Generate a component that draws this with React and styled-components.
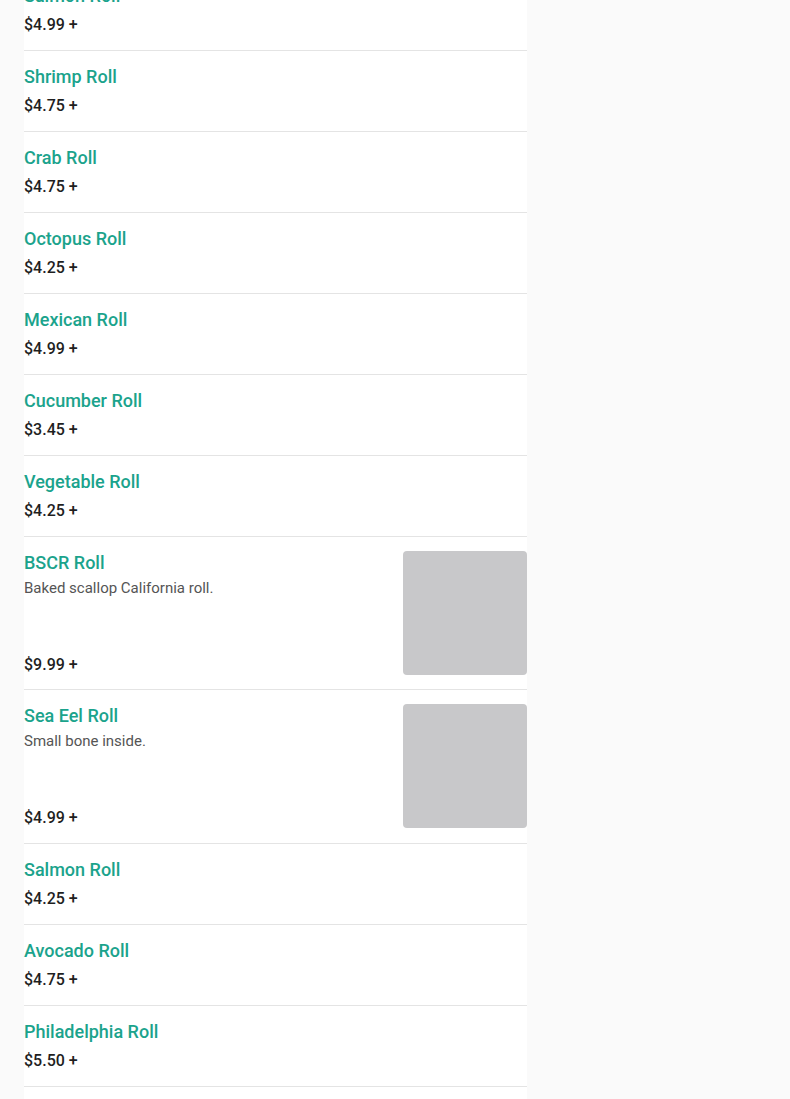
import React from "react";
import styled, { createGlobalStyle } from "styled-components";

const Global = createGlobalStyle`
  html, body { margin: 0; padding: 0; background: #fafafa; }
  body { font-family: Roboto, "Noto Sans", Arial, sans-serif; }
`;

const Page = styled.div`
  display: flex;
  padding-left: 24px;
  height: 1099px;
  overflow: hidden;
`;

const Panel = styled.div`
  width: 503px;
  background: #ffffff;
  display: flex;
  flex-direction: column;
  margin-top: -30px;
`;

const Row = styled.div`
  display: flex;
  gap: 16px;
  padding: ${(p) => (p.$image ? "14px 0 14px" : "14px 0 13px")};
  border-bottom: 1px solid #e4e4e4;
  &:nth-child(9) { padding-bottom: 15px; }
`;

const Info = styled.div`
  flex: 1;
  display: flex;
  flex-direction: column;
  justify-content: ${(p) => (p.$image ? "space-between" : "flex-start")};
`;

const Name = styled.div`
  font-size: 18px;
  line-height: 24px;
  font-weight: 500;
  color: #1ba38c;
  margin-bottom: ${(p) => (p.$image ? "0" : "5px")};
`;

const Desc = styled.div`
  font-size: 15px;
  line-height: 20px;
  color: #555555;
  margin-top: 3px;
`;

const Price = styled.div`
  font-size: 16px;
  line-height: 24px;
  font-weight: 500;
  color: #1f1f1f;
  margin-bottom: ${(p) => (p.$image ? "-2px" : "0")};
`;

const Thumb = styled.div`
  width: 124px;
  height: 124px;
  flex: none;
  border-radius: 4px;
  background: #c8c8ca;
`;

const items = [
  { name: "Salmon Roll", price: "$4.99 +" },
  { name: "Shrimp Roll", price: "$4.75 +" },
  { name: "Crab Roll", price: "$4.75 +" },
  { name: "Octopus Roll", price: "$4.25 +" },
  { name: "Mexican Roll", price: "$4.99 +" },
  { name: "Cucumber Roll", price: "$3.45 +" },
  { name: "Vegetable Roll", price: "$4.25 +" },
  { name: "BSCR Roll", price: "$9.99 +", desc: "Baked scallop California roll.", image: true },
  { name: "Sea Eel Roll", price: "$4.99 +", desc: "Small bone inside.", image: true },
  { name: "Salmon Roll", price: "$4.25 +" },
  { name: "Avocado Roll", price: "$4.75 +" },
  { name: "Philadelphia Roll", price: "$5.50 +" },
  { name: "Spicy Tuna Roll", price: "$5.50 +" },
];

export default function App() {
  return (
    <>
      <Global />
      <Page>
        <Panel>
          {items.map((it, i) => (
            <Row key={i} $image={it.image}>
              <Info $image={it.image}>
                <div>
                  <Name $image={it.image}>{it.name}</Name>
                  {it.desc && <Desc>{it.desc}</Desc>}
                </div>
                <Price $image={it.image}>{it.price}</Price>
              </Info>
              {it.image && <Thumb />}
            </Row>
          ))}
        </Panel>
      </Page>
    </>
  );
}
